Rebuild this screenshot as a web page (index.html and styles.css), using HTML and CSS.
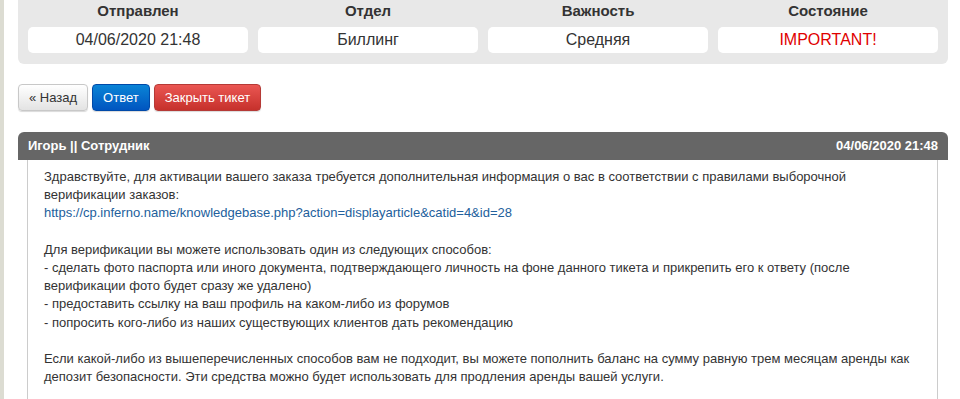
FILE: index.html
```html
<!DOCTYPE html>
<html>
<head>
  <meta charset="utf-8">
  <title>Тикет</title>
  <link rel="stylesheet" href="styles.css">
</head>
<body>
  <div class="page">
    <div class="ticket_info">
      <div class="info_col">
        <div class="info_title">Отправлен</div>
        <div class="info_value">04/06/2020 21:48</div>
      </div>
      <div class="info_col">
        <div class="info_title">Отдел</div>
        <div class="info_value">Биллинг</div>
      </div>
      <div class="info_col">
        <div class="info_title">Важность</div>
        <div class="info_value">Средняя</div>
      </div>
      <div class="info_col">
        <div class="info_title">Состояние</div>
        <div class="info_value important">IMPORTANT!</div>
      </div>
    </div>

    <div class="buttons">
      <a class="btn" href="#">&laquo; Назад</a>
      <a class="btn btn_blue" href="#">Ответ</a>
      <a class="btn btn_red" href="#">Закрыть тикет</a>
    </div>

    <div class="reply">
      <div class="reply_head">
        <span class="reply_name">Игорь || Сотрудник</span>
        <span class="reply_date">04/06/2020 21:48</span>
      </div>
      <div class="reply_body">
        Здравствуйте, для активации вашего заказа требуется дополнительная информация о вас в соответствии с правилами выборочной верификации заказов:<br>
        <a href="#">https://cp.inferno.name/knowledgebase.php?action=displayarticle&amp;catid=4&amp;id=28</a><br>
        <br>
        Для верификации вы можете использовать один из следующих способов:<br>
        - сделать фото паспорта или иного документа, подтверждающего личность на фоне данного тикета и прикрепить его к ответу (после верификации фото будет сразу же удалено)<br>
        - предоставить ссылку на ваш профиль на каком-либо из форумов<br>
        - попросить кого-либо из наших существующих клиентов дать рекомендацию<br>
        <br>
        Если какой-либо из вышеперечисленных способов вам не подходит, вы можете пополнить баланс на сумму равную трем месяцам аренды как депозит безопасности. Эти средства можно будет использовать для продления аренды вашей услуги.
      </div>
    </div>
  </div>
</body>
</html>
```

FILE: styles.css
```css
html, body {
  margin: 0;
  padding: 0;
  height: 100%;
}
body {
  font-family: "Liberation Sans", Arial, sans-serif;
  font-size: 14px;
  color: #333;
  background: #fff;
  border-left: 4px solid #dcdcd2;
  overflow: hidden;
}
.page {
  padding: 0 12px 0 14px;
}

/* ticket info */
.ticket_info {
  display: flex;
  gap: 10px;
  background: #e8e8e8;
  padding: 2px 10px 11px;
  border-radius: 0 0 6px 6px;
}
.info_col {
  flex: 1;
  text-align: center;
}
.info_title {
  font-weight: bold;
  font-size: 15px;
  line-height: 18px;
  margin-bottom: 7px;
}
.info_value {
  background: #fff;
  border-radius: 5px;
  font-size: 16px;
  line-height: 26px;
  height: 26px;
}
.important {
  color: #e00000;
}

/* buttons */
.buttons {
  display: flex;
  gap: 4px;
  margin-top: 20px;
}
.btn {
  display: inline-block;
  padding: 0 10px;
  height: 27px;
  line-height: 26px;
  font-size: 13px;
  border-radius: 4px;
  text-decoration: none;
  color: #333;
  border: 1px solid #c8c8c8;
  box-sizing: border-box;
  background: linear-gradient(#ffffff, #e3e3e3);
  box-shadow: 0 1px 1px rgba(0, 0, 0, 0.15);
}
.btn_blue {
  color: #fff;
  border-color: #0049a8;
  background: linear-gradient(#0a84d6, #0055c0);
}
.btn_red {
  color: #fff;
  border-color: #b53a36;
  background: linear-gradient(#ea5652, #c6312c);
}

/* reply */
.reply {
  margin-top: 21px;
}
.reply_head {
  display: flex;
  justify-content: space-between;
  background: #666;
  color: #fff;
  font-weight: bold;
  font-size: 13px;
  height: 28px;
  line-height: 28px;
  padding: 0 10px;
  border-radius: 6px 6px 0 0;
}
.reply_body {
  margin: 0 10px 0 9px;
  border: 1px solid #ccc;
  border-top: 0;
  padding: 8px 12px 13px 16px;
  font-size: 13px;
  line-height: 18.2px;
}
.reply_body a {
  color: #22609c;
  text-decoration: none;
}
```
